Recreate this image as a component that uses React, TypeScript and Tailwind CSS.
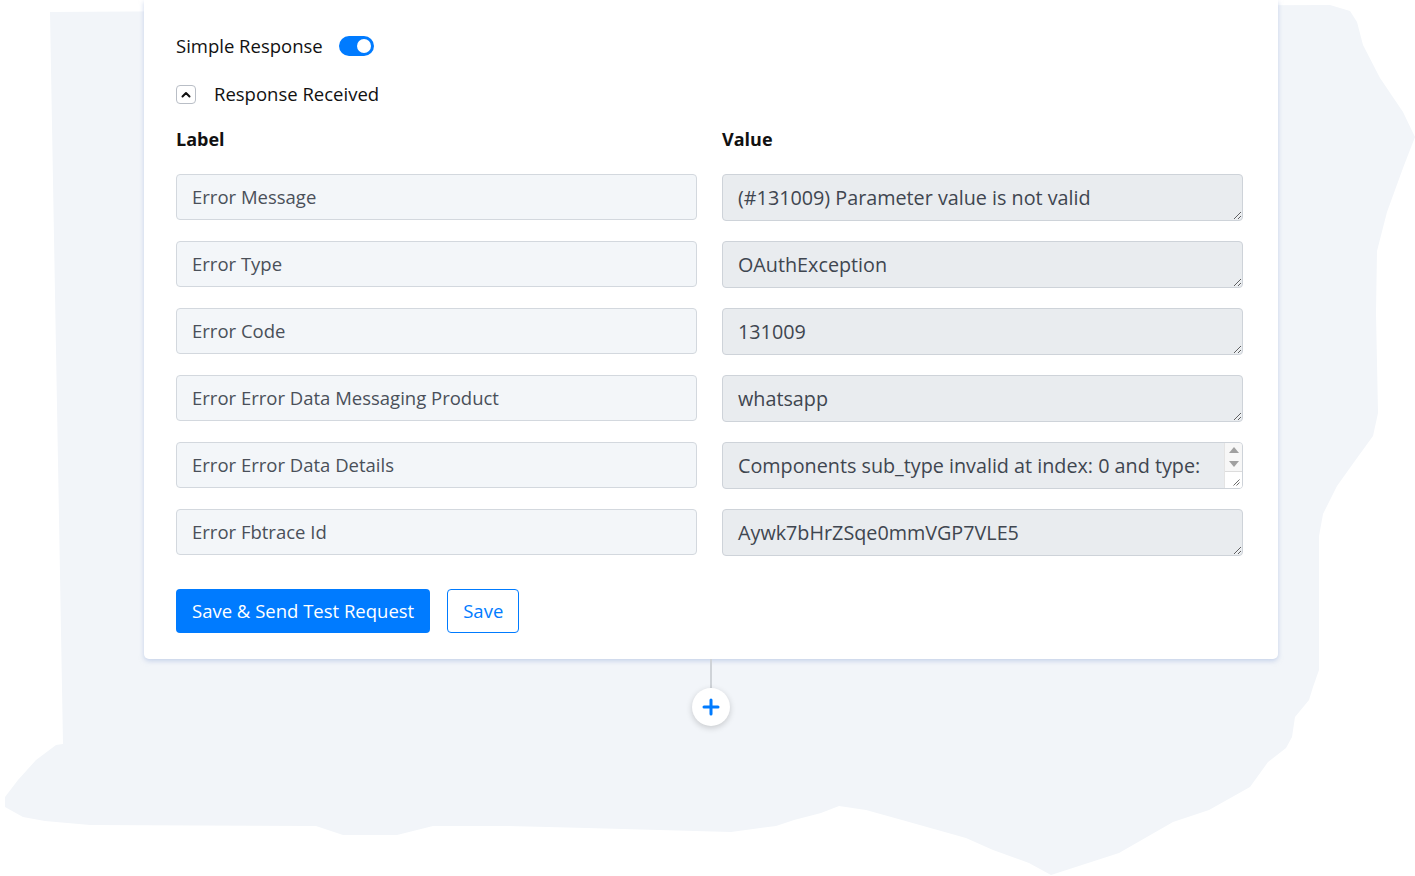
import React from "react";

const rows: { label: string; value: string; scroll?: boolean }[] = [
  { label: "Error Message", value: "(#131009) Parameter value is not valid" },
  { label: "Error Type", value: "OAuthException" },
  { label: "Error Code", value: "131009" },
  { label: "Error Error Data Messaging Product", value: "whatsapp" },
  {
    label: "Error Error Data Details",
    value: "Components sub_type invalid at index: 0 and type:",
    scroll: true,
  },
  { label: "Error Fbtrace Id", value: "Aywk7bHrZSqe0mmVGP7VLE5" },
];

const font = "'Open Sans', 'Noto Sans', sans-serif";

// Torn-paper backdrop drawn behind the step card
const blobPath =
  "M50,12 L1330,5 L1350,11 L1357,22 L1363,45 L1380,78 L1403,112 L1415,137 L1403,168 L1387,212 L1377,251 L1376,313 L1377,363 L1378,413 L1373,436 L1357,458 L1337,486 L1323,514 L1319,536 L1319,670 L1313,687 L1309,700 L1295,717 L1292,737 L1286,748 L1268,762 L1250,787 L1209,810 L1173,822 L1119,853 L1051,875 L1029,863 L993,850 L966,838 L902,820 L866,810 L839,806 L821,813 L794,820 L776,826 L731,832 L659,830 L587,828 L505,826 L433,826 L397,835 L343,835 L316,826 L90,825 L45,821 L23,817 L5,807 L5,797 L18,780 L36,760 L56,745 L63,744 Z";

function Toggle() {
  return (
    <div className="flex h-[20px] w-[35px] items-center justify-end rounded-full bg-[#007bff] px-[3px]">
      <div className="h-[14px] w-[14px] rounded-full bg-white" />
    </div>
  );
}

function Grip() {
  return (
    <svg width="7" height="7" viewBox="0 0 7 7">
      <path d="M6.5 0.5 L0.5 6.5 M6.5 3.5 L3.5 6.5" stroke="#6b6b6b" strokeWidth="1" />
    </svg>
  );
}

function ScrollingValue({ value }: { value: string }) {
  return (
    <div className="flex h-[47px] overflow-hidden rounded-[4px] border border-[#ced3d9] bg-[#e9ecef]">
      <div className="flex-1 overflow-hidden whitespace-nowrap px-[15px] pt-[10px] text-[19.75px] leading-[26px] text-[#3f4650]">
        {value}
      </div>
      <div className="flex w-[18px] flex-col border-l border-[#e4e4e4] bg-[#f7f7f7]">
        <div className="flex h-[14px] items-center justify-center">
          <svg width="10" height="6" viewBox="0 0 10 6">
            <path d="M5 0 L10 6 L0 6 Z" fill="#a0a0a0" />
          </svg>
        </div>
        <div className="flex h-[14px] items-center justify-center">
          <svg width="10" height="6" viewBox="0 0 10 6">
            <path d="M0 0 L10 0 L5 6 Z" fill="#a0a0a0" />
          </svg>
        </div>
        <div className="flex flex-1 items-end justify-end border-t border-[#dcdcdc] bg-white pb-[2px] pr-[2px]">
          <Grip />
        </div>
      </div>
    </div>
  );
}

export default function App() {
  return (
    <div
      className="relative h-[876px] w-full overflow-hidden bg-white"
      style={{ fontFamily: font }}
    >
      <svg
        className="absolute inset-0"
        width="1415"
        height="876"
        viewBox="0 0 1415 876"
      >
        <path d={blobPath} fill="#f2f5f9" />
      </svg>

      <div className="relative flex flex-col items-start">
        <div className="ml-[144px] w-[1134px] rounded-b-[5px] bg-white pl-[32px] pr-[35px] pt-[32px] pb-[26px] shadow-[0_2px_5px_rgba(160,180,220,0.55)]">
          <div className="flex h-[28px] items-center gap-[16px]">
            <span className="text-[18.5px] text-[#111]">Simple Response</span>
            <Toggle />
          </div>

          <div className="mt-[20px] flex h-[28px] items-center gap-[18px]">
            <button className="flex h-[19px] w-[20px] items-center justify-center rounded-[4px] border border-[#b9bec6] bg-white">
              <svg width="10" height="7" viewBox="0 0 10 7">
                <path
                  d="M1.5 5.5 L5 2 L8.5 5.5"
                  fill="none"
                  stroke="#111"
                  strokeWidth="2"
                  strokeLinecap="round"
                  strokeLinejoin="round"
                />
              </svg>
            </button>
            <span className="text-[18.5px] text-[#111]">Response Received</span>
          </div>

          <div className="mt-[18px] grid h-[24px] grid-cols-2 items-center gap-x-[25px]">
            <span className="text-[18px] font-bold text-[#111]">Label</span>
            <span className="text-[18px] font-bold text-[#111]">Value</span>
          </div>

          <div className="mt-[24px] grid grid-cols-2 items-start gap-x-[25px] gap-y-[20px]">
            {rows.map((r) => (
              <React.Fragment key={r.label}>
                <div className="flex h-[46px] items-center rounded-[4px] border border-[#d3d8de] bg-[#f3f6f9] px-[15px] text-[18.5px] text-[#4a5059]">
                  {r.label}
                </div>
                {r.scroll ? (
                  <ScrollingValue value={r.value} />
                ) : (
                  <textarea
                    readOnly
                    rows={1}
                    value={r.value}
                    className="block h-[47px] w-full rounded-[4px] border border-[#ced3d9] bg-[#e9ecef] px-[15px] pt-[10px] pb-[8px] text-[19.75px] leading-[26px] text-[#3f4650] outline-none"
                    style={{ fontFamily: font }}
                  />
                )}
              </React.Fragment>
            ))}
          </div>

          <div className="mt-[33px] flex items-center gap-[17px]">
            <button className="h-[44px] rounded-[4px] bg-[#007bff] px-[16px] text-[18.5px] text-white">
              Save &amp; Send Test Request
            </button>
            <button className="h-[44px] rounded-[4px] border border-[#007bff] bg-white px-[15px] text-[18.5px] text-[#007bff]">
              Save
            </button>
          </div>
        </div>

        <div className="flex w-full flex-col items-center">
          <div className="ml-[7px] flex flex-col items-center">
            <div className="h-[29px] w-[2px] bg-[#cfd3d8]" />
            <button className="flex h-[38px] w-[38px] items-center justify-center rounded-full bg-white shadow-[0_2px_6px_rgba(0,0,0,0.18)]">
              <svg width="18" height="18" viewBox="0 0 18 18">
                <path
                  d="M9 2 V16 M2 9 H16"
                  stroke="#007bff"
                  strokeWidth="3"
                  strokeLinecap="round"
                />
              </svg>
            </button>
          </div>
        </div>
      </div>
    </div>
  );
}
